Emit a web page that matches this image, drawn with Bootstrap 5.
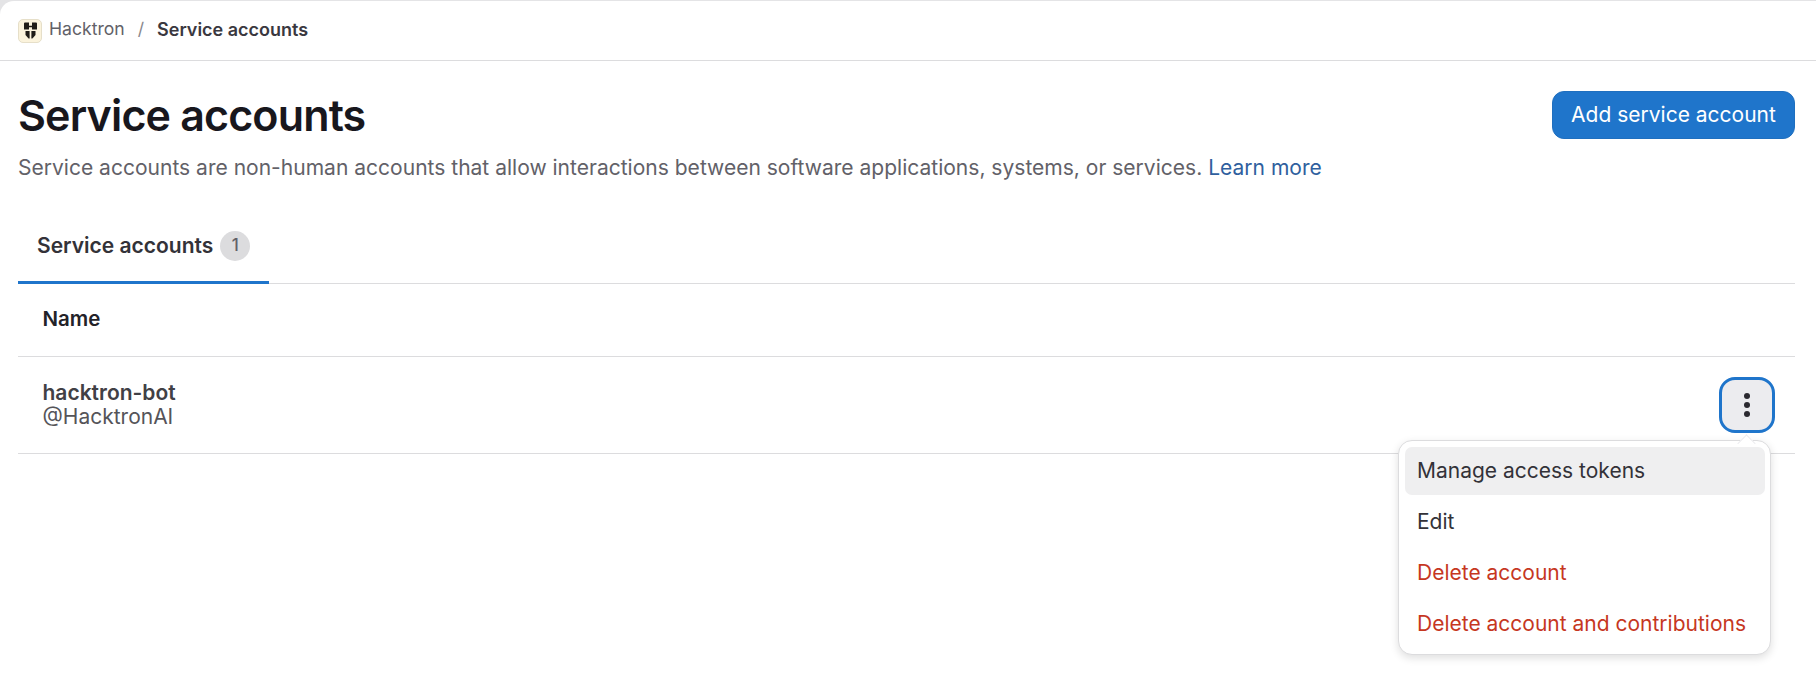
<!DOCTYPE html>
<html lang="en">
  <head>
    <meta charset="UTF-8" />
    <meta name="viewport" content="width=device-width, initial-scale=1.0" />
    <title>Service accounts</title>
    <link
      rel="stylesheet"
      href="https://cdn.jsdelivr.net/npm/bootstrap@5.3.3/dist/css/bootstrap.min.css"
    />
    <script src="https://cdn.jsdelivr.net/npm/bootstrap@5.3.3/dist/js/bootstrap.bundle.min.js"></script>
    <style>
      body {
        font-family: Inter, "Liberation Sans", sans-serif;
        background: #e4e4e6;
        color: #333238;
        height: 682px;
        overflow: hidden;
        padding-top: 1px;
      }
      .page-shell {
        background: #fff;
        height: 681px;
        border-top-left-radius: 14px;
      }
      .crumb-bar {
        height: 60px;
        padding: 0 18px;
        border-bottom: 1.5px solid #dcdcde;
        font-size: 17.6px;
      }
      .crumb-bar span.crumb-text { margin-bottom: 3px; }
      .crumb-logo {
        width: 24px;
        height: 24px;
        margin-right: 7px;
        background: #fbf3dc;
        border: 1px solid #e6dfc9;
        border-radius: 5px;
      }
      .crumb-link { color: #626168; }
      .crumb-sep { color: #89888d; margin: 0 13px; }
      .crumb-now { font-size: 18px; font-weight: 600; color: #3a383f; }
      .page-body { padding: 0 21px 0 18px; position: relative; }
      .head-row { padding-top: 30px; }
      .page-title {
        font-size: 43px;
        font-weight: 600;
        line-height: 48px;
        letter-spacing: -0.85px;
        color: #18171d;
        margin: 0;
      }
      .add-btn {
        height: 48px;
        width: 243px;
        font-size: 21px;
        color: #fff;
        background: #1f75cb;
        border: 1px solid #1f6fbf;
        border-radius: 12px;
      }
      .page-desc {
        font-size: 21.04px;
        line-height: 28px;
        color: #626168;
        margin: 15px 0 0;
      }
      .page-desc a { color: #2f5f9e; text-decoration: none; }
      .tab-row {
        margin-top: 32px;
        border-bottom: 1.5px solid #dcdcde;
      }
      .tab-item {
        display: flex;
        align-items: center;
        gap: 7px;
        height: 70px;
        width: 251px;
        padding: 0 0 4px 19px;
        font-size: 21px;
        font-weight: 600;
        color: #333238;
        border-bottom: 3px solid #1f75cb;
        margin-bottom: -1.5px;
      }
      .tab-count {
        width: 30px;
        height: 30px;
        border-radius: 50%;
        background: #dcdcde;
        color: #626168;
        font-size: 17px;
        font-weight: 500;
      }
      .name-head {
        height: 73px;
        padding-left: 24.5px;
        font-size: 20.5px;
        font-weight: 600;
        color: #232228;
        border-bottom: 1.5px solid #dcdcde;
      }
      .acct-row {
        height: 97.5px;
        padding: 0 20px 0 24.5px;
        border-bottom: 1.5px solid #dcdcde;
      }
      .acct-name { font-size: 21px; font-weight: 600; line-height: 24px; color: #414045; }
      .acct-user { font-size: 21px; line-height: 24px; color: #555459; }
      .kebab-btn {
        width: 56px;
        height: 56px;
        padding: 0;
        background: #ececef;
        border: 3px solid #1f75cb;
        border-radius: 16px;
      }
      .acct-menu {
        position: absolute;
        top: 379px;
        right: 45px;
        width: 373px;
        height: 215px;
        padding: 6px 5px 5px 6px;
        background: #fff;
        border: 1px solid #dcdcde;
        border-radius: 14px;
        box-shadow: 0 3px 8px rgba(0, 0, 0, 0.13);
      }
      .acct-menu::before {
        content: "";
        position: absolute;
        top: -4px;
        right: 17px;
        width: 13px;
        height: 13px;
        background: #fff;
        border-top: 1px solid #ececef;
        border-left: 1px solid #ececef;
        transform: rotate(45deg);
      }
      .menu-row {
        display: flex;
        align-items: center;
        height: 48px;
        margin-bottom: 3px;
        padding-left: 12px;
        font-size: 21px;
        color: #333238;
        border-radius: 7px;
        position: relative;
      }
      .menu-row.is-active { background: #efeff0; }
      .menu-row.is-danger { color: #c6371f; }
    </style>
  </head>
  <body>
    <div class="page-shell">
      <nav class="crumb-bar d-flex align-items-center">
        <span class="crumb-logo d-flex align-items-center justify-content-center">
          <svg width="15" height="17" viewBox="0 0 15 17" fill="#1f1b16">
            <path d="M1 1.5Q1 .5 2 .5h4v3.2h3V.5h4q1 0 1 1v6H9V5.2H6v2.3H1z" />
            <path d="M2.5 9H6.6v7.5h-1L2.5 13z" />
            <path d="M12.5 9H8.4v7.5h1L12.5 13z" />
          </svg>
        </span>
        <span class="crumb-text"><a class="crumb-link text-decoration-none">Hacktron</a></span>
        <span class="crumb-sep crumb-text">/</span>
        <span class="crumb-now crumb-text">Service accounts</span>
      </nav>

      <section class="page-body">
        <div class="head-row d-flex justify-content-between align-items-start">
          <h1 class="page-title">Service accounts</h1>
          <button type="button" class="btn add-btn p-0">Add service account</button>
        </div>
        <p class="page-desc">
          Service accounts are non-human accounts that allow interactions between software applications, systems, or services. <a href="#">Learn more</a>
        </p>

        <div class="tab-row d-flex">
          <div class="tab-item">
            Service accounts
            <span class="tab-count d-flex align-items-center justify-content-center">1</span>
          </div>
        </div>

        <div class="name-head d-flex align-items-center">Name</div>

        <div class="acct-row d-flex align-items-center justify-content-between">
          <div>
            <div class="acct-name">hacktron-bot</div>
            <div class="acct-user">@HacktronAI</div>
          </div>
          <button type="button" class="kebab-btn d-flex align-items-center justify-content-center">
            <svg width="8" height="26" viewBox="0 0 8 26" fill="#2b2a30">
              <circle cx="4" cy="4" r="3" />
              <circle cx="4" cy="13" r="3" />
              <circle cx="4" cy="22" r="3" />
            </svg>
          </button>
        </div>

        <div class="acct-menu">
          <div class="menu-row is-active">Manage access tokens</div>
          <div class="menu-row">Edit</div>
          <div class="menu-row is-danger">Delete account</div>
          <div class="menu-row is-danger">Delete account and contributions</div>
        </div>
      </section>
    </div>
  </body>
</html>
